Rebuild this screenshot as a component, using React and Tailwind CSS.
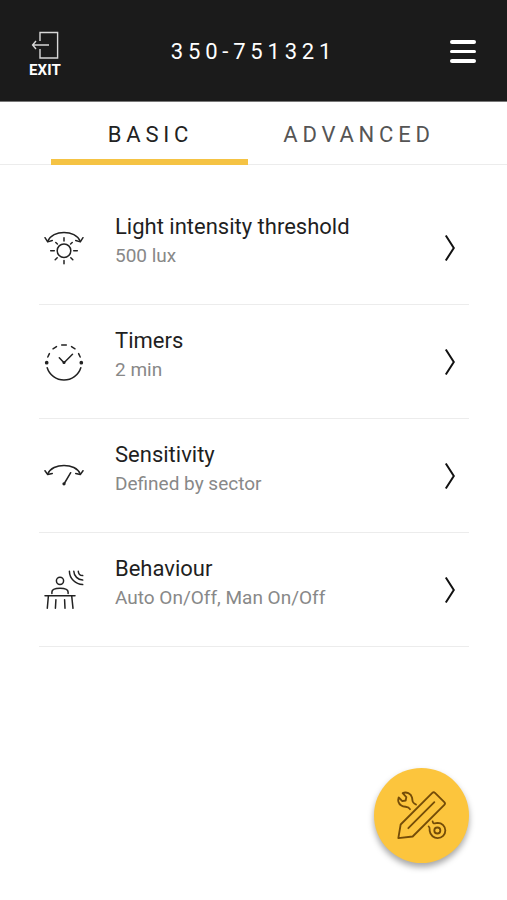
const LightIcon = () => (
  <>
    <path d="M7.7 17.3C12.5 5.4 35.5 5.4 40.3 17.3" />
    <path d="M5 13.7L7.7 17.9L12.3 16.5M43 13.7L40.3 17.9L35.7 16.5" />
    <circle cx="24" cy="26.7" r="6.8" />
    <path d="M24 13.8V17M24 36.5V39.8M10.7 26.7H14.3M33.7 26.7H37.3M15.8 18.5L17.4 20M32.2 18.5L30.6 20M15.2 35.8L17.2 33.8M32.8 35.8L30.8 33.8" />
  </>
)

const TimerIcon = () => (
  <>
    <path d="M7.2 29.7A17.6 17.6 0 0 0 40.8 29.7" />
    <path d="M7.8 19L9.4 15.6M13 10.8L16.5 8.6M21.7 7.1H26.3M31.5 8.6L35 10.8M38.6 15.6L40.2 19" />
    <path d="M19.3 19.7L24 24.7L32.5 16.2" />
    <circle cx="6.7" cy="24.7" r="1.1" fill="currentColor" />
    <circle cx="41.3" cy="24.7" r="1.1" fill="currentColor" />
    <circle cx="24" cy="24.5" r="0.8" fill="currentColor" />
  </>
)

const SensitivityIcon = () => (
  <>
    <path d="M7.7 22C12.5 10.5 35.5 10.5 40.3 22" />
    <path d="M5 18.7L7.7 22.6L12.3 21.4M43 18.7L40.3 22.6L35.7 21.4" />
    <path d="M30.7 20.7L24 32" />
    <circle cx="24" cy="31.8" r="0.9" fill="currentColor" />
  </>
)

const BehaviourIcon = () => (
  <>
    <circle cx="20" cy="14.8" r="3.6" />
    <path d="M11.9 27.5V26C11.9 20.9 28.1 20.9 28.1 26V27.5" />
    <path d="M5 29.8H35M8.4 29.8L7.3 42.3M15.9 33.7L15.4 42.3M24.6 33.7L25 42.3M31.7 29.8L33 42.3" />
    <path d="M29.4 5.2C29.6 12.6 35.4 18.3 42.7 18.6M33.8 5.2C34 10 37.9 13.9 42.7 14.1M38.3 5.2C38.4 7.6 40.3 9.5 42.7 9.6" />
  </>
)

const settings = [
  { title: "Light intensity threshold", value: "500 lux", Icon: LightIcon },
  { title: "Timers", value: "2 min", Icon: TimerIcon },
  { title: "Sensitivity", value: "Defined by sector", Icon: SensitivityIcon },
  { title: "Behaviour", value: "Auto On/Off, Man On/Off", Icon: BehaviourIcon },
]

const Header = () => (
  <header className="flex h-[102px] items-center justify-between border-b border-[#777777] bg-[#1b1b1b] pt-0.5 pl-7 pr-[31px] text-white">
    <button className="flex w-[34px] flex-col items-center pt-1">
      <svg className="h-[30px] w-[30px]" viewBox="0 0 30 30" fill="none" stroke="#d8d8d8" strokeWidth="1.4">
        <path d="M10 11V2.5H27.6V28H10V19" />
        <path d="M19 15H3M6 11L2.6 15L6 19" />
      </svg>
      <span className="mt-0.5 text-[15px] leading-4 font-bold tracking-[0.1px]">EXIT</span>
    </button>
    <h1 className="mr-[5px] text-[22px] tracking-[4.8px]">350-751321</h1>
    <button className="flex w-[26px] flex-col gap-1.5">
      <span className="h-[3.4px] rounded-full bg-white" />
      <span className="h-[3.4px] rounded-full bg-white" />
      <span className="h-[3.4px] rounded-full bg-white" />
    </button>
  </header>
)

const Tabs = () => (
  <nav className="flex h-[63px] border-b border-[#ececec] pl-[51px] text-[22px] tracking-[4.8px]">
    <button className="-mb-px w-[197px] border-b-6 border-[#f5c344] pt-[7px] pl-0.5 text-[#222222]">BASIC</button>
    <button className="w-[222px] pt-0.5 text-[#555555]">ADVANCED</button>
  </nav>
)

const SettingRow = ({ title, value, Icon }) => (
  <li className="flex h-[114px] items-center border-b border-[#ececec]">
    <svg className="ml-px h-12 w-12 shrink-0 text-[#222222]" viewBox="0 0 48 48" fill="none" stroke="currentColor" strokeWidth="1.5" strokeLinecap="round" strokeLinejoin="round">
      <Icon />
    </svg>
    <div className="ml-[27px] flex-1 pb-3.5">
      <p className="text-[22px] leading-[30px] text-[#1f1f1f]">{title}</p>
      <p className="text-[19px] leading-7 text-[#888888]">{value}</p>
    </div>
    <svg className="mr-3 h-7 w-3.5" viewBox="0 0 14 28" fill="none" stroke="#111111" strokeWidth="2">
      <path d="M2.8 1.5L10.8 14L2.8 26.5" />
    </svg>
  </li>
)

const App = () => {
  return (
    <div className="flex h-[900px] w-[507px] flex-col bg-white font-['Roboto',sans-serif]">
      <Header />
      <Tabs />
      <ul className="mr-[38px] ml-[39px] mt-[26px]">
        {settings.map((item) => (
          <SettingRow key={item.title} {...item} />
        ))}
      </ul>
      <button className="mt-auto mr-[38px] mb-[37px] h-[95px] w-[95px] self-end rounded-full bg-[#fcc53d] shadow-[0_4px_6px_rgba(0,0,0,0.35)]">
        <svg className="h-full w-full" viewBox="42 37.5 285 285" fill="none" stroke="#744c08" strokeWidth="5.5" strokeLinejoin="round" strokeLinecap="round">
          {/* pencil */}
          <path d="M115 248L122 207L217 112Q221 108 225 112L253 140Q257 144 253 148L158 243Z" />
          <path d="M145 218L223 140" />
          {/* wrench */}
          <path d="M150 161C144 150 134 157 124 150C116 145 113 135 116 126L127 137L137 135L139 125L128 113C139 108 153 114 156 126C159 138 154 139 168 147" />
          {/* tape measure */}
          <circle cx="232" cy="225" r="9" />
          <path d="M206 213C210 215 209 221 209 226C211 240 222 248 233 248C246 248 256 238 256 225C256 212 246 202 233 202C225 203 219 207 218 198" />
        </svg>
      </button>
    </div>
  )
}

export default App
